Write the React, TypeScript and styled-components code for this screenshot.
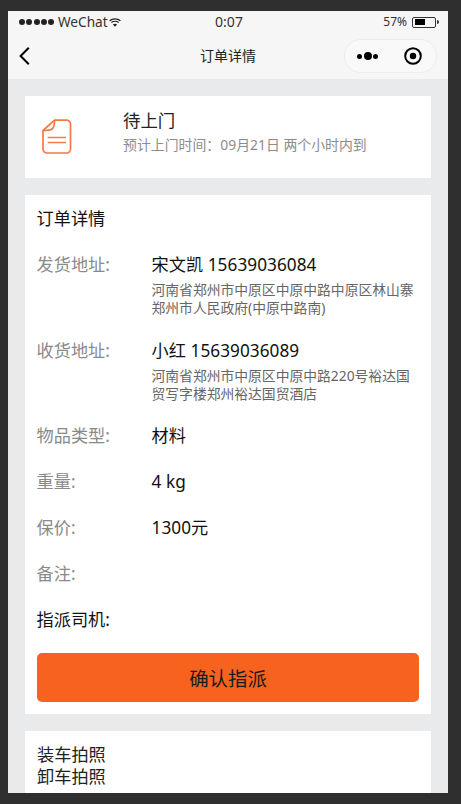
// App.tsx
import styled, { createGlobalStyle } from 'styled-components';

const GlobalStyle = createGlobalStyle`
	html, body {
		margin: 0;
		padding: 0;
		height: 100%;
		overflow: hidden;
		background: #2f2f2f;
	}
	* {
		box-sizing: border-box;
	}
`;

interface Detail {
	label: string;
	value?: string;
	address?: string[];
	strong?: boolean;
}

const details: Detail[] = [
	{
		label: '发货地址:',
		value: '宋文凯 15639036084',
		address: ['河南省郑州市中原区中原中路中原区林山寨', '郑州市人民政府(中原中路南)'],
	},
	{
		label: '收货地址:',
		value: '小红 15639036089',
		address: ['河南省郑州市中原区中原中路220号裕达国', '贸写字楼郑州裕达国贸酒店'],
	},
	{ label: '物品类型:', value: '材料' },
	{ label: '重量:', value: '4 kg' },
	{ label: '保价:', value: '1300元' },
	{ label: '备注:' },
	{ label: '指派司机:', strong: true },
];

const DocIcon = () => (
	<svg width="30" height="36" viewBox="0 0 30 36" fill="none" stroke="#f47a4a" strokeWidth="1.7">
		<path d="M12.5 1.2 H24.5 a4 4 0 0 1 4 4 V30 a4 4 0 0 1 -4 4 H5 a4 4 0 0 1 -4 -4 V11.5 Z" strokeLinejoin="round" />
		<path d="M1.2 11.5 C5 11.5 8.5 11.3 10.2 10 C12 8.6 12.5 5 12.5 1.2" />
		<path d="M5.7 18.5 H24 M5.7 23.5 H24" />
	</svg>
);

const WifiIcon = () => (
	<svg width="12" height="9" viewBox="0 0 12 9" fill="none" stroke="#222" strokeWidth="1.3">
		<path d="M0.6 2.8 C3.6 0.2 8.4 0.2 11.4 2.8" />
		<path d="M2.4 4.6 C4.4 3 7.6 3 9.6 4.6" />
		<path d="M6 8.8 L3.9 6.4 C5.2 5.4 6.8 5.4 8.1 6.4 Z" fill="#222" stroke="none" />
	</svg>
);

const BackIcon = () => (
	<svg width="11" height="18" viewBox="0 0 11 18" fill="none" stroke="#000" strokeWidth="2">
		<path d="M9.8 0.8 L1.6 9 L9.8 17.2" />
	</svg>
);

const RecordIcon = () => (
	<svg width="18" height="18" viewBox="0 0 18 18">
		<circle cx="9" cy="9" r="7.8" fill="none" stroke="#000" strokeWidth="2" />
		<circle cx="9" cy="9" r="3.2" fill="#000" />
	</svg>
);

const App = () => {
	return (
		<Page>
			<GlobalStyle />
			<Phone>
				<StatusBar>
					<Signal>
						<Dots>
							{[0, 1, 2, 3, 4].map(i => <Dot key={i} />)}
						</Dots>
						<Carrier>WeChat</Carrier>
						<WifiIcon />
					</Signal>
					<Clock>0:07</Clock>
					<Power>
						<Percent>57%</Percent>
						<Battery>
							<BatteryFill />
						</Battery>
						<BatteryTip />
					</Power>
				</StatusBar>
				<NavBar>
					<BackButton>
						<BackIcon />
					</BackButton>
					<NavTitle>订单详情</NavTitle>
					<Capsule>
						<MoreDots>
							<MoreDot />
							<MoreDot $big />
							<MoreDot />
						</MoreDots>
						<RecordIcon />
					</Capsule>
				</NavBar>
				<Content>
					<StateCard>
						<IconBox>
							<DocIcon />
						</IconBox>
						<StateText>
							<StateTitle>待上门</StateTitle>
							<StateHint>预计上门时间：09月21日 两个小时内到</StateHint>
						</StateText>
					</StateCard>
					<DetailCard>
						<CardTitle>订单详情</CardTitle>
						{details.map(item => (
							<Row key={item.label}>
								<Label $strong={item.strong}>{item.label}</Label>
								<div>
									{item.value && <Value>{item.value}</Value>}
									{item.address && (
										<Address>
											{item.address.map(line => <div key={line}>{line}</div>)}
										</Address>
									)}
								</div>
							</Row>
						))}
						<AssignButton>确认指派</AssignButton>
					</DetailCard>
					<PhotoCard>
						<PhotoLine>装车拍照</PhotoLine>
						<PhotoLine>卸车拍照</PhotoLine>
					</PhotoCard>
				</Content>
			</Phone>
		</Page>
	);
};

export default App;

const Page = styled.div`
	width: 461px;
	height: 804px;
	padding: 11px 13px 11px 8px;
	background: #2f2f2f;
	font-family: "Noto Sans", "Noto Sans CJK SC", sans-serif;
	color: #111;
`;

const Phone = styled.div`
	width: 100%;
	height: 100%;
	display: flex;
	flex-direction: column;
	overflow: hidden;
	background: #e9eaec;
`;

const StatusBar = styled.div`
	height: 22px;
	flex: none;
	display: grid;
	grid-template-columns: 1fr auto 1fr;
	align-items: center;
	padding: 0 9px 0 11px;
	background: #f6f6f6;
	color: #333;
`;

const Signal = styled.div`
	display: flex;
	align-items: center;
`;

const Dots = styled.div`
	display: flex;
	gap: 1.25px;
	margin-right: 4px;
`;

const Dot = styled.span`
	width: 6px;
	height: 6px;
	border-radius: 50%;
	background: #222;
`;

const Carrier = styled.span`
	font-size: 13.6px;
	line-height: 16px;
	margin-right: 1px;
`;

const Clock = styled.span`
	font-size: 14px;
	line-height: 16px;
`;

const Power = styled.div`
	display: flex;
	align-items: center;
	justify-content: flex-end;
`;

const Percent = styled.span`
	font-size: 12px;
	line-height: 16px;
	margin-right: 5px;
`;

const Battery = styled.span`
	width: 24px;
	height: 11px;
	padding: 1.5px 2px;
	border: 1px solid #333;
	border-radius: 2px;
`;

const BatteryFill = styled.span`
	display: block;
	width: 58%;
	height: 100%;
	background: #000;
`;

const BatteryTip = styled.span`
	width: 2px;
	height: 4px;
	margin-left: 1px;
	background: #333;
	border-radius: 0 2px 2px 0;
`;

const NavBar = styled.div`
	height: 46px;
	flex: none;
	display: grid;
	grid-template-columns: 1fr auto 1fr;
	align-items: center;
	padding: 0 11px 0 11px;
	background: #f6f6f6;
`;

const BackButton = styled.div`
	display: flex;
	align-items: center;
`;

const NavTitle = styled.div`
	font-size: 14px;
	line-height: 20px;
	color: #222;
`;

const Capsule = styled.div`
	justify-self: end;
	width: 93px;
	height: 34px;
	display: flex;
	align-items: center;
	justify-content: space-between;
	padding: 0 14px 0 12px;
	background: #f9f9f9;
	border: 1px solid #ececec;
	border-radius: 17px;
`;

const MoreDots = styled.div`
	display: flex;
	align-items: center;
	gap: 1.5px;
`;

const MoreDot = styled.span<{ $big?: boolean }>`
	width: ${props => (props.$big ? 8 : 5)}px;
	height: ${props => (props.$big ? 8 : 5)}px;
	border-radius: 50%;
	background: #000;
`;

const Content = styled.div`
	flex: 1;
	min-height: 0;
	display: flex;
	flex-direction: column;
	gap: 17px;
	padding: 17px 17px 0;
`;

const StateCard = styled.div`
	height: 82px;
	flex: none;
	display: flex;
	padding: 12px 0 0 17px;
	background: #fff;
`;

const IconBox = styled.div`
	width: 81px;
	flex: none;
	padding-top: 11px;
`;

const StateText = styled.div`
	display: flex;
	flex-direction: column;
	gap: 4px;
`;

const StateTitle = styled.div`
	font-size: 17.4px;
	line-height: 24px;
	color: #222;
`;

const StateHint = styled.div`
	font-size: 13.9px;
	line-height: 18px;
	color: #8c8c8c;
`;

const DetailCard = styled.div`
	flex: none;
	display: flex;
	flex-direction: column;
	gap: 21.8px;
	padding: 12px 12px;
	background: #fff;
`;

const CardTitle = styled.div`
	font-size: 17.2px;
	line-height: 24px;
	color: #111;
	margin-left: -0.5px;
`;

const Row = styled.div`
	display: grid;
	grid-template-columns: 115px 1fr;
	margin-left: -0.5px;
`;

const Label = styled.div<{ $strong?: boolean }>`
	font-size: 17.2px;
	line-height: 24px;
	color: ${props => (props.$strong ? '#111' : '#8a8a8a')};
`;

const Value = styled.div`
	font-size: 17.2px;
	line-height: 24px;
	letter-spacing: 0.05px;
	color: #111;
`;

const Address = styled.div`
	margin-top: 4px;
	font-size: 13.8px;
	line-height: 18px;
	color: #666;
`;

const AssignButton = styled.div`
	height: 49px;
	margin-top: -0.8px;
	display: flex;
	align-items: center;
	justify-content: center;
	background: #f7621e;
	border-radius: 5px;
	font-size: 19.4px;
	color: #1a1a1a;
`;

const PhotoCard = styled.div`
	flex: 1;
	padding: 13px 12px 0;
	background: #fff;
`;

const PhotoLine = styled.div`
	font-size: 17.2px;
	line-height: 22px;
	color: #222;
`;
